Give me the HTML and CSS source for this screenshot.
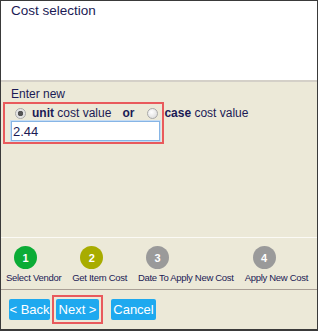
FILE: index.html
```html
<!DOCTYPE html>
<html lang="en">
<head>
  <meta charset="UTF-8">
  <title>Cost selection</title>
  <link rel="stylesheet" href="styles.css">
</head>
<body>
<div class="frame">
  <header class="top">
    <h1 class="top-h">Cost selection</h1>
  </header>
  <main class="form">
    <div class="form-label">Enter new</div>
    <div class="pick">
      <div class="pick-row">
        <span class="radio checked"></span>
        <span class="pick-text"><b>unit</b> cost value</span>
        <b class="pick-or">or</b>
        <span class="radio"></span>
        <span class="pick-text"><b>case</b> cost value</span>
      </div>
      <input class="pick-input" type="text" value="2.44">
    </div>
  </main>
  <section class="steps">
    <div class="step">
      <span class="step-dot green">1</span>
      <span class="step-label">Select Vendor</span>
    </div>
    <div class="step">
      <span class="step-dot olive">2</span>
      <span class="step-label">Get Item Cost</span>
    </div>
    <div class="step">
      <span class="step-dot">3</span>
      <span class="step-label">Date To Apply New Cost</span>
    </div>
    <div class="step">
      <span class="step-dot">4</span>
      <span class="step-label">Apply New Cost</span>
    </div>
  </section>
  <footer class="actions">
    <button class="btn btn-back">&lt; Back</button>
    <span class="btn-mark"><button class="btn btn-next">Next &gt;</button></span>
    <button class="btn btn-cancel">Cancel</button>
  </footer>
</div>
</body>
</html>
```

FILE: styles.css
```css
body {
  margin: 0;
  font-family: "Liberation Sans", Arial, sans-serif;
  color: #1b1a55;
}
.frame {
  width: 318px;
  height: 331px;
  box-sizing: border-box;
  border: 1px solid #3a3a3a;
  border-bottom-width: 2px;
  display: flex;
  flex-direction: column;
  background-color: #ece9d8;
}
.top {
  height: 81px;
  background-color: #fff;
  border-bottom: 2px solid #d4d0c8;
  padding: 2px 10px;
  box-sizing: border-box;
}
.top-h {
  margin: 0;
  font-size: 13.5px;
  font-weight: normal;
  line-height: 16px;
}
.form {
  height: 156px;
  padding: 5px 0 0 2px;
  box-sizing: border-box;
  border-bottom: 1px solid #fbfaf5;
}
.form-label {
  font-size: 12px;
  line-height: 14px;
  padding-left: 8px;
  margin-bottom: 1px;
}
.pick {
  width: 161px;
  height: 42px;
  box-sizing: border-box;
  border: 2px solid #e95a5c;
  padding: 1px 0 0 6px;
  white-space: nowrap;
}
.pick-row {
  display: flex;
  align-items: center;
  height: 16px;
  font-size: 12px;
}
.radio {
  width: 11px;
  height: 11px;
  box-sizing: border-box;
  border-radius: 50%;
  border: 1px solid #a9a9a9;
  background: radial-gradient(circle at 40% 35%, #fff, #d6d6d6);
  margin: 0 6px 0 4px;
  flex: none;
}
.radio.checked {
  background: radial-gradient(circle, #555 0 2.5px, #e0e0e0 3px, #f4f4f4);
}
.pick-or {
  margin: 0 9px 0 11px;
}
.pick-input {
  display: block;
  width: 149px;
  height: 20px;
  box-sizing: border-box;
  border: 1px solid #86b5e6;
  outline: 1px solid #c6dcf3;
  padding: 0 1px;
  font: 13px "Liberation Sans", Arial, sans-serif;
  color: #1b1a55;
  background: #fff;
}
.steps {
  height: 52px;
  display: flex;
  gap: 11px;
  padding: 8px 0 0 5px;
  box-sizing: border-box;
  border-bottom: 1px solid #a99f95;
}
.step {
  display: flex;
  flex-direction: column;
  align-items: flex-start;
}
.step-dot {
  width: 23px;
  height: 23px;
  margin-left: 8px;
  border-radius: 50%;
  background-color: #9a9a9a;
  color: #fff;
  font-size: 11px;
  font-weight: bold;
  display: flex;
  align-items: center;
  justify-content: center;
}
.step-dot.green {
  background-color: #0bac36;
}
.step-dot.olive {
  background-color: #a8ac00;
}
.step-label {
  margin-top: 3px;
  font-size: 9.5px;
  letter-spacing: -0.3px;
  line-height: 12px;
  white-space: nowrap;
}
.actions {
  flex: 1;
  display: flex;
  align-items: center;
  padding-left: 8px;
  padding-bottom: 1px;
}
.btn {
  height: 21px;
  border: 0;
  border-radius: 2px;
  background-color: #1ea9ef;
  color: #fff;
  font: 13px "Liberation Sans", Arial, sans-serif;
  padding: 0;
}
.btn-back {
  width: 41px;
}
.btn-next {
  width: 43px;
}
.btn-mark {
  border: 2px solid #e95a5c;
  padding: 2px;
  margin-left: 2px;
  display: flex;
}
.btn-cancel {
  width: 45px;
  margin-left: 8px;
}
```
